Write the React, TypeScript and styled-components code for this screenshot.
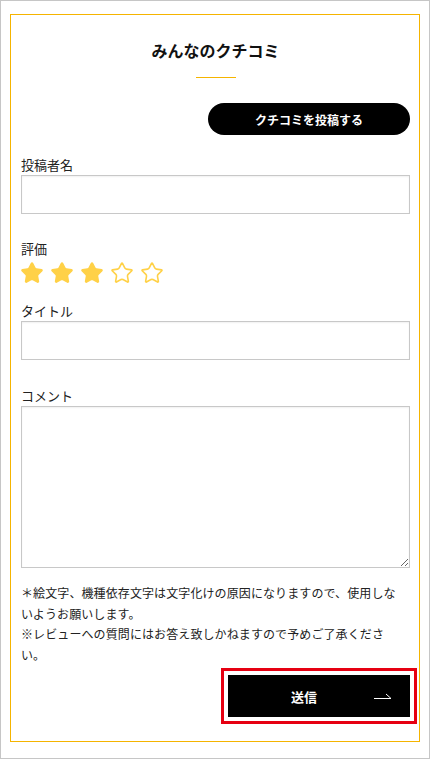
import React from 'react'
import styled, { createGlobalStyle } from 'styled-components'
import { Star } from 'lucide-react'

const GlobalStyle = createGlobalStyle`
  html, body {
    margin: 0;
    padding: 0;
    background: #fff;
  }
  body {
    font-family: "Noto Sans CJK JP", "Noto Sans", sans-serif;
    color: #222;
  }
`

const Frame = styled.div`
  box-sizing: border-box;
  width: 430px;
  height: 759px;
  border: 1px solid #c6c6c6;
  padding: 13px 9px 0 9px;
`

const Panel = styled.div`
  box-sizing: border-box;
  height: 728px;
  border: 1px solid #f5b400;
  padding: 24px 9px 0 10px;
  display: flex;
  flex-direction: column;
`

const Title = styled.h2`
  margin: 0;
  font-size: 16px;
  font-weight: 700;
  line-height: 22px;
  text-align: center;
  color: #111;
`

const Rule = styled.div`
  width: 40px;
  height: 1px;
  background: #f5b400;
  margin: 16px auto 0;
`

const PostRow = styled.div`
  display: flex;
  justify-content: flex-end;
  margin-top: 25px;
`

const PillButton = styled.button`
  width: 202px;
  height: 32px;
  border: none;
  border-radius: 16px;
  background: #000;
  color: #fff;
  font-family: inherit;
  font-size: 12px;
  font-weight: 700;
  cursor: pointer;
`

const Label = styled.div<{ $top: number }>`
  margin-top: ${(p) => p.$top}px;
  font-size: 13px;
  line-height: 18px;
  color: #222;
`

const TextInput = styled.input`
  box-sizing: border-box;
  display: block;
  width: 100%;
  height: 39px;
  margin-top: 1px;
  border: 1px solid #c8c8c8;
  box-shadow: inset 0 1px 2px rgba(0, 0, 0, 0.06);
  outline: none;
`

const TextArea = styled.textarea`
  box-sizing: border-box;
  display: block;
  width: 100%;
  height: 162px;
  margin-top: 1px;
  border: 1px solid #c8c8c8;
  box-shadow: inset 0 1px 2px rgba(0, 0, 0, 0.06);
  outline: none;
  resize: vertical;
`

const Stars = styled.div`
  display: flex;
  gap: 6px;
  margin-top: 3px;
  margin-left: -1px;
`

const Note = styled.p`
  margin: 15px 0 0;
  font-size: 12px;
  letter-spacing: 0.1px;
  line-height: 20.6px;
  color: #222;
  padding-right: 6px;
`

const SendRow = styled.div`
  display: flex;
  justify-content: flex-end;
  margin-top: 10px;
`

const SendButton = styled.button`
  position: relative;
  width: 182px;
  height: 42px;
  padding: 0 30px 0 0;
  border: none;
  background: #000;
  color: #fff;
  font-family: inherit;
  font-size: 13px;
  font-weight: 700;
  outline: 3px solid #e60012;
  outline-offset: 4px;
  cursor: pointer;
`

const Arrow = styled.svg`
  position: absolute;
  right: 18px;
  top: 16px;
`

export default function App() {
  const rating = 3
  return (
    <>
      <GlobalStyle />
      <Frame>
        <Panel>
          <Title>みんなのクチコミ</Title>
          <Rule />
          <PostRow>
            <PillButton>クチコミを投稿する</PillButton>
          </PostRow>

          <Label $top={21}>投稿者名</Label>
          <TextInput type="text" />

          <Label $top={26}>評価</Label>
          <Stars>
            {[1, 2, 3, 4, 5].map((n) => (
              <Star
                key={n}
                size={24}
                strokeWidth={1.6}
                color="#ffd147"
                fill={n <= rating ? '#ffd147' : 'none'}
              />
            ))}
          </Stars>

          <Label $top={17}>タイトル</Label>
          <TextInput type="text" />

          <Label $top={27}>コメント</Label>
          <TextArea />

          <Note>
            ＊絵文字、機種依存文字は文字化けの原因になりますので、使用しないようお願いします。
            <br />
            ※レビューへの質問にはお答え致しかねますので予めご了承ください。
          </Note>

          <SendRow>
            <SendButton>
              送信
              <Arrow width="18" height="8" viewBox="0 0 18 8">
                <path d="M0 7.5 H17 L12 3" fill="none" stroke="#fff" strokeWidth="1" />
              </Arrow>
            </SendButton>
          </SendRow>
        </Panel>
      </Frame>
    </>
  )
}
